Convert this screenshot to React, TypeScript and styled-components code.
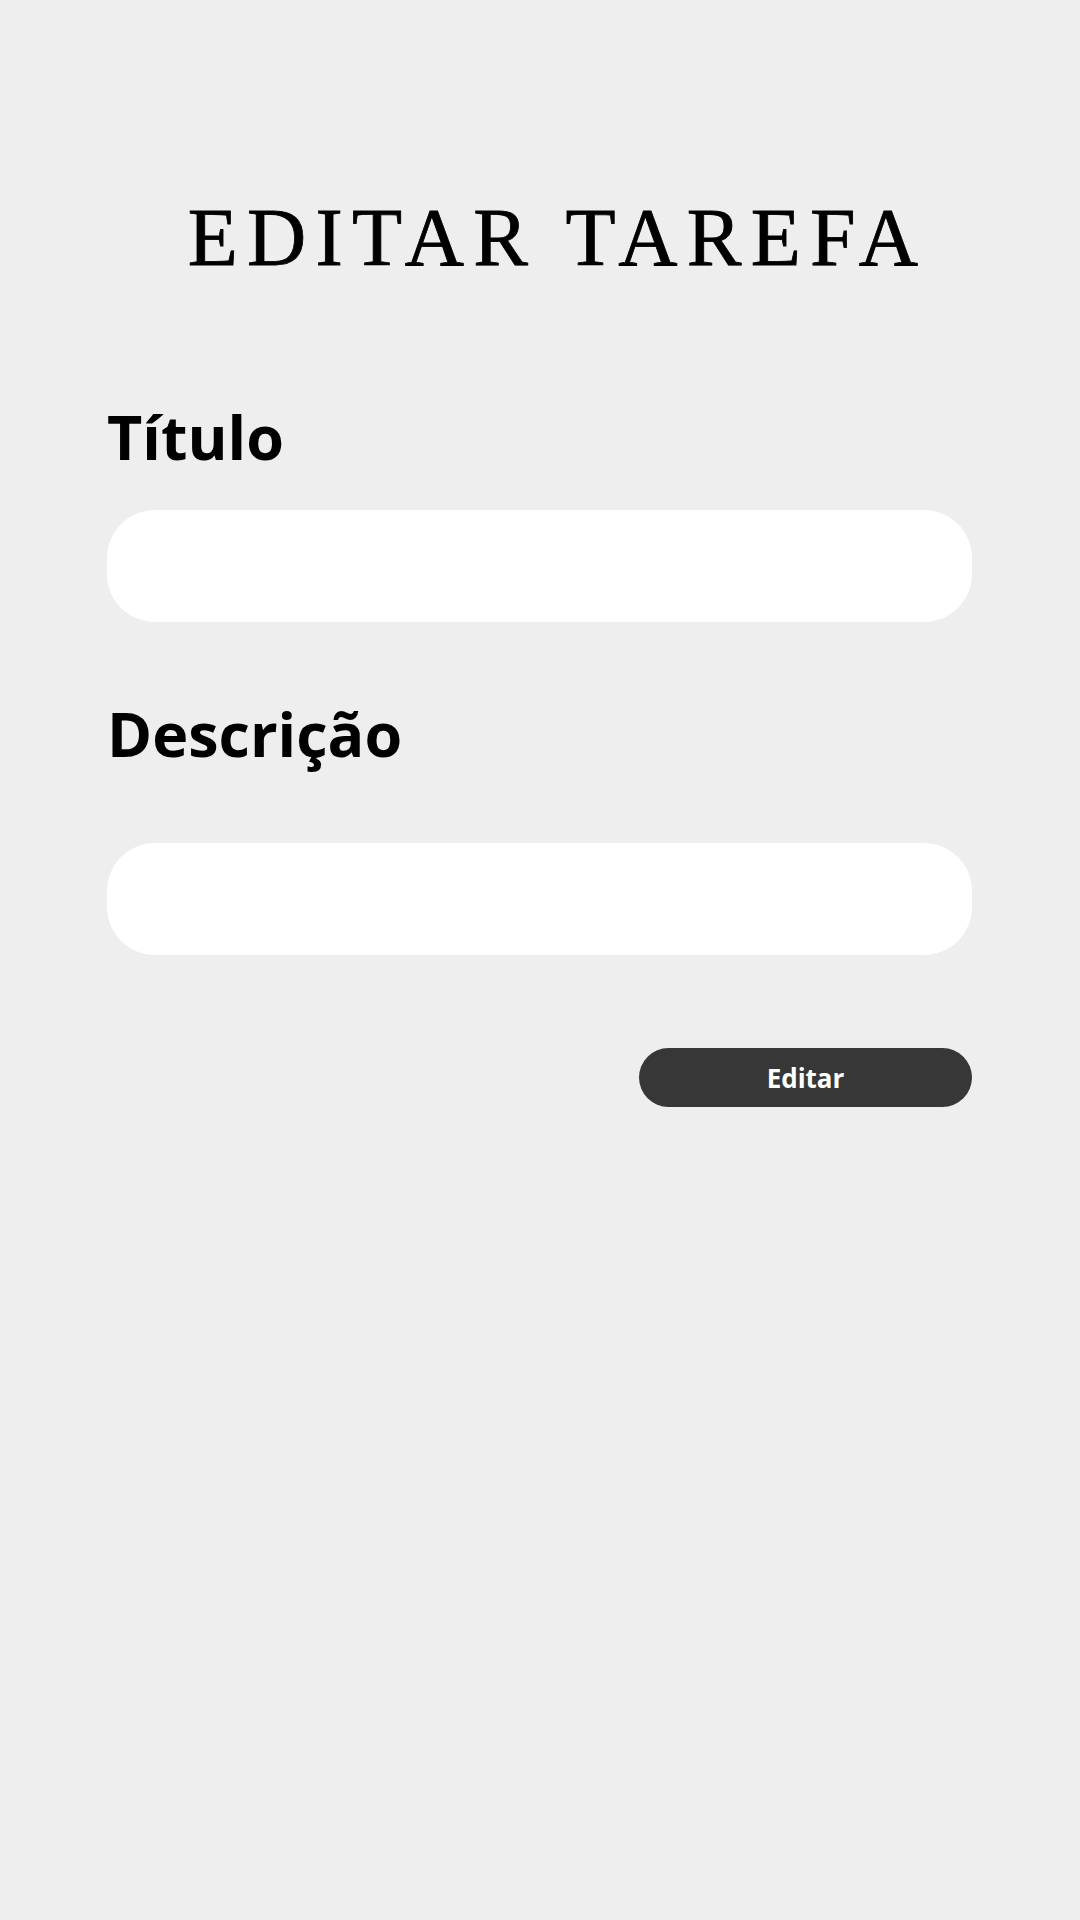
import React from "react";
import styled, { createGlobalStyle } from "styled-components";

const GlobalStyle = createGlobalStyle`
  html, body {
    margin: 0;
    padding: 0;
    background: #eeeeee;
  }
  body {
    font-family: "Open Sans", "Liberation Sans", sans-serif;
  }
  * { box-sizing: border-box; }
`;

const Page = styled.main`
  min-height: 1920px;
  background: #eeeeee;
  display: flex;
  flex-direction: column;
  padding: 197px 108px 0 107px;
`;

const Title = styled.h1`
  margin: 0 0 0 36px;
  font-family: "Liberation Serif", "DejaVu Serif", serif;
  font-weight: 400;
  font-size: 82px;
  line-height: 1;
  letter-spacing: 9.25px;
  text-align: center;
  color: #000;
  -webkit-text-stroke: 0.8px #000;
`;

const Form = styled.form`
  display: flex;
  flex-direction: column;
`;

const Label = styled.label<{ $top: number; $gap: number }>`
  display: block;
  margin-top: ${(p) => p.$top}px;
  margin-bottom: ${(p) => p.$gap}px;
  font-family: "Open Sans", "Liberation Sans", sans-serif;
  font-weight: 700;
  font-size: 61px;
  line-height: 1;
  color: #000;
`;

const Field = styled.input`
  display: block;
  width: 100%;
  height: 112px;
  border: none;
  outline: none;
  border-radius: 48px;
  background: #ffffff;
  padding: 0 40px;
  font-family: "Open Sans", "Liberation Sans", sans-serif;
  font-size: 32px;
  color: #000;
`;

const Actions = styled.div`
  display: flex;
  justify-content: flex-end;
  margin-top: 93px;
`;

const Button = styled.button`
  width: 333px;
  height: 59px;
  border: none;
  border-radius: 30px;
  background: #373737;
  color: #ffffff;
  font-family: "Open Sans", "Liberation Sans", sans-serif;
  font-weight: 700;
  font-size: 26px;
  line-height: 1;
  cursor: pointer;
  padding: 0;
`;

export default function App() {
  return (
    <>
      <GlobalStyle />
      <Page>
        <Title>EDITAR TAREFA</Title>
        <Form onSubmit={(e) => e.preventDefault()}>
          <Label htmlFor="titulo" $top={127} $gap={43}>
            Título
          </Label>
          <Field id="titulo" type="text" />
          <Label htmlFor="descricao" $top={81} $gap={79}>
            Descrição
          </Label>
          <Field id="descricao" type="text" />
          <Actions>
            <Button type="submit">Editar</Button>
          </Actions>
        </Form>
      </Page>
    </>
  );
}
